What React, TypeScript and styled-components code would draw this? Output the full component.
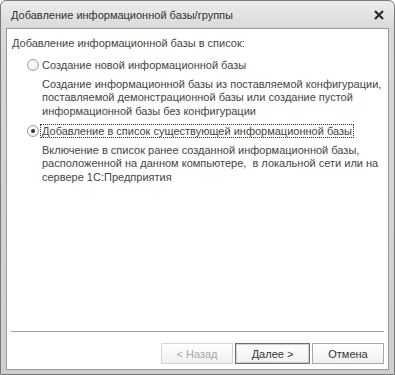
import React from "react";
import styled, { createGlobalStyle } from "styled-components";

const Global = createGlobalStyle`
  html, body { margin: 0; padding: 0; background: #ffffff; }
  body { font-family: "Liberation Sans", Arial, sans-serif; }
`;

const Window = styled.div`
  width: 395px;
  height: 375px;
  box-sizing: border-box;
  border: 1px solid #7a7a7a;
  border-radius: 6px 6px 0 0;
  background: linear-gradient(#ececec, #d8d8d8 30px, #cfcfcf);
  display: flex;
  flex-direction: column;
  padding: 0 5px 4px 5px;
`;

const TitleBar = styled.div`
  height: 27px;
  display: flex;
  align-items: center;
  justify-content: space-between;
  padding: 1px 5px 0 5px;
  box-sizing: border-box;
  color: #333333;
  font-size: 11px;
`;

const Close = styled.svg`
  width: 10px;
  height: 10px;
`;

const Body = styled.div`
  flex: 1;
  background: #ffffff;
  border: 1px solid #9a9a9a;
  display: flex;
  flex-direction: column;
  padding: 7px 0 0 0;
  color: #454545;
  font-size: 11px;
`;

const Heading = styled.div`
  padding-left: 5px;
  line-height: 15px;
`;

const Options = styled.div`
  padding-left: 20px;
  display: flex;
  flex-direction: column;
  margin-top: 5px;
  flex: 1;
`;

const OptionRow = styled.div`
  display: flex;
  align-items: center;
  height: 17px;
`;

const Radio = styled.span<{ $checked?: boolean }>`
  width: 12px;
  height: 12px;
  box-sizing: border-box;
  border-radius: 50%;
  border: 1px solid #a0a0a0;
  background: radial-gradient(circle at 40% 35%, #ffffff, #e6e6e6);
  display: flex;
  align-items: center;
  justify-content: center;
  margin-right: 1px;
  &::after {
    content: "";
    display: ${(p) => (p.$checked ? "block" : "none")};
    width: 4px;
    height: 4px;
    border-radius: 50%;
    background: #333;
  }
`;

const Label = styled.span<{ $focused?: boolean }>`
  padding: 0 1px;
  line-height: 12px;
  border: 1px dotted ${(p) => (p.$focused ? "#333" : "transparent")};
`;

const Desc = styled.div`
  padding-left: 15px;
  margin-top: 4.75px;
  margin-bottom: 3.75px;
  line-height: 13.5px;
  white-space: nowrap;
`;

const Separator = styled.div`
  height: 1px;
  background: #a0a0a0;
  margin: 0 4px 0 4px;
`;

const Footer = styled.div`
  display: flex;
  justify-content: flex-end;
  gap: 2px;
  padding: 11px 4px 5px 0;
`;

const Button = styled.button<{ $default?: boolean }>`
  font-family: "Liberation Sans", Arial, sans-serif;
  font-size: 11px;
  height: 21px;
  width: ${(p) => (p.$default ? "75px" : "72px")};
  box-sizing: border-box;
  border: 1px solid ${(p) => (p.$default ? "#6e6e6e" : "#a8a8a8")};
  background: linear-gradient(#ffffff, #f0f0f0);
  color: #333;
  padding: 0;
  box-shadow: ${(p) => (p.$default ? "inset 0 0 0 1px #d0d0d0" : "none")};
  &:disabled {
    color: #a8a8a8;
    border-color: #d4d4d4;
  }
`;

export default function App() {
  return (
    <>
      <Global />
      <Window>
        <TitleBar>
          <span>Добавление информационной базы/группы</span>
          <Close viewBox="0 0 10 10">
            <path d="M1 1 L9 9 M9 1 L1 9" stroke="#2a2a2a" strokeWidth="2.2" />
          </Close>
        </TitleBar>
        <Body>
          <Heading>Добавление информационной базы в список:</Heading>
          <Options>
            <OptionRow>
              <Radio />
              <Label>Создание новой информационной базы</Label>
            </OptionRow>
            <Desc>
              Создание информационной базы из поставляемой конфигурации,
              <br />
              поставляемой демонстрационной базы или создание пустой
              <br />
              информационной базы без конфигурации
            </Desc>
            <OptionRow>
              <Radio $checked />
              <Label $focused>Добавление в список существующей информационной базы</Label>
            </OptionRow>
            <Desc>
              Включение в список ранее созданной информационной базы,
              <br />
              расположенной на данном компьютере,&nbsp; в локальной сети или на
              <br />
              сервере 1С:Предприятия
            </Desc>
          </Options>
          <Separator />
          <Footer>
            <Button disabled>&lt; Назад</Button>
            <Button $default>Далее &gt;</Button>
            <Button>Отмена</Button>
          </Footer>
        </Body>
      </Window>
    </>
  );
}
